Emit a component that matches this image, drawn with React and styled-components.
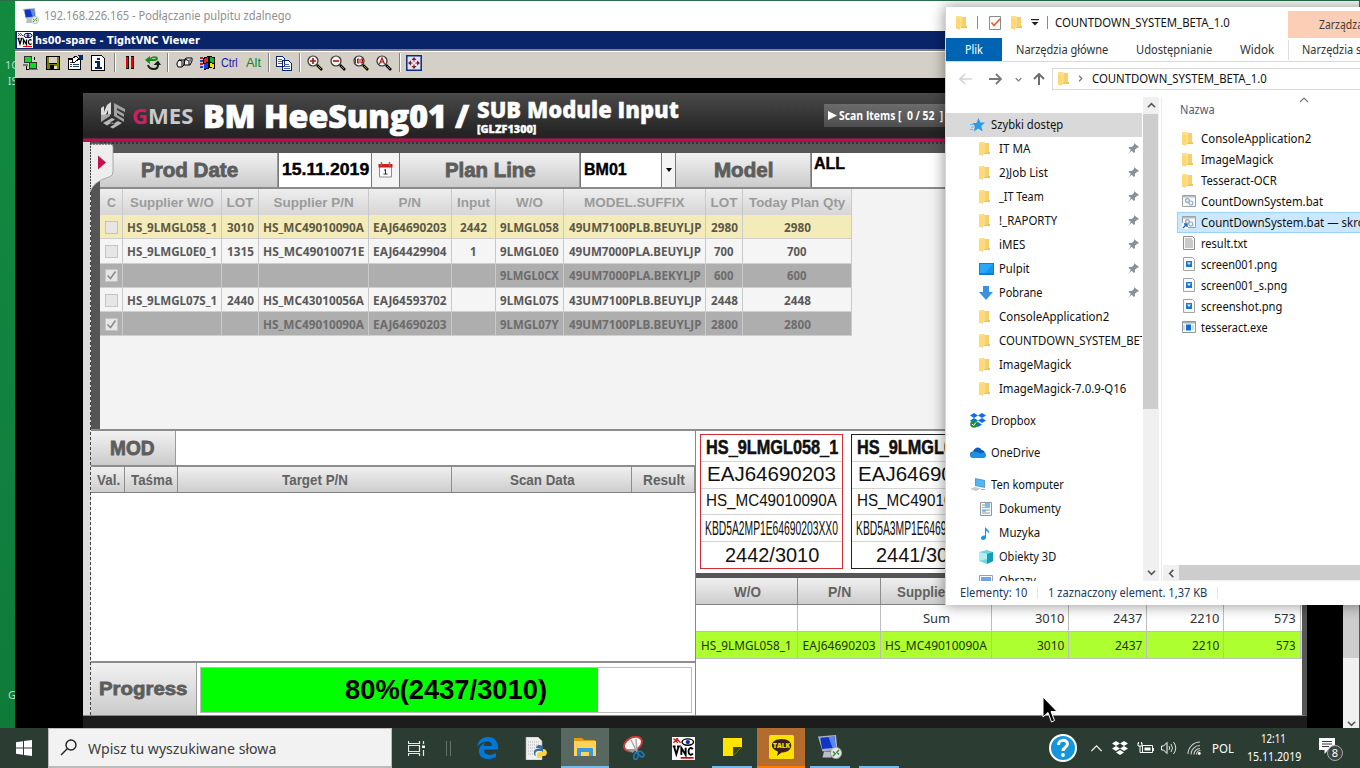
import React, { useLayoutEffect, useRef, useState } from "react";
import styled, { createGlobalStyle } from "styled-components";

const Global = createGlobalStyle`
  * { box-sizing: border-box; }
  html, body { margin: 0; padding: 0; width: 1360px; height: 768px; overflow: hidden; }
  body { font-family: "Noto Sans", "Open Sans", sans-serif; font-size: 12px; background: #13853c; }
  svg { display: block; flex: none; }
`;

/* ---------- text fitted to a measured width ---------- */
const FitBox = styled.span`
  display: inline-block;
  flex: none;
  width: ${(p) => p.$w}px;
  white-space: nowrap;
`;
const FitInner = styled.span`
  display: inline-block;
  transform-origin: 0 50%;
`;
function Fit({ w, children }) {
  const ref = useRef(null);
  const [s, setS] = useState(1);
  useLayoutEffect(() => {
    if (ref.current.offsetWidth) setS(w / ref.current.offsetWidth);
  }, [w]);
  return (
    <FitBox $w={w}>
      <FitInner ref={ref} style={{ transform: `scaleX(${s})` }}>{children}</FitInner>
    </FitBox>
  );
}

/* ---------- desktop ---------- */
const Screen = styled.div`
  position: relative;
  width: 1360px;
  height: 768px;
  overflow: hidden;
  display: flex;
  flex-direction: column;
  background: linear-gradient(180deg, #128a3e, #118040 60%, #0f7a38);
`;
const DesktopRow = styled.div`
  display: flex;
  height: 728px;
  border-top: 1px solid #2c6e49;
`;
const DesktopStrip = styled.div`
  flex: none;
  width: 15px;
  display: flex;
  flex-direction: column;
  padding: 56px 0 0 5px;
  color: #b9dcc4;
  font-size: 11px;
  line-height: 16px;
  overflow: hidden;
  white-space: nowrap;
`;
const StripLast = styled.div`
  margin-top: 598px;
  padding-left: 3px;
`;
const RdpWindow = styled.div`
  flex: none;
  width: 1344px;
  display: flex;
  flex-direction: column;
  background: #000;
`;
const RdpTitle = styled.div`
  height: 30px;
  display: flex;
  align-items: center;
  gap: 5px;
  padding: 0 0 1px 8px;
  background: #fff;
  color: #8f8f8f;
`;
const VncTitle = styled.div`
  height: 18px;
  display: flex;
  align-items: center;
  gap: 2px;
  padding-left: 2px;
  background: #0a246a;
  color: #fff;
  font: bold 11px "DejaVu Sans", sans-serif;
`;
const VncToolbar = styled.div`
  height: 29px;
  display: flex;
  align-items: center;
  padding: 0 0 4px 8px;
  background: #d4d0c8;
  border-top: 2px solid #808080;
  box-shadow: inset 0 1px #fff;
  font: 12px "Liberation Sans", sans-serif;
`;
const Slot = styled.div`
  width: ${(p) => p.$w}px;
  height: 18px;
  display: flex;
  align-items: center;
  color: ${(p) => p.$c || "#000"};
`;
const ToolSep = styled.div`
  width: 2px;
  height: 19px;
  margin-right: ${(p) => p.$r}px;
  background: #808080;
  border-right: 1px solid #fff;
`;
const RemoteArea = styled.div`
  flex: 1;
  display: flex;
  justify-content: space-between;
  padding-left: 68px;
  background: #000;
`;

/* ---------- GMES application ---------- */
const Gmes = styled.div`
  flex: none;
  width: 1224px;
  margin-top: 15px;
  height: 635px;
  display: flex;
  flex-direction: column;
  background: #1c1c1c;
`;
const GmesHeader = styled.div`
  height: 45px;
  display: flex;
  align-items: center;
  padding-left: 17px;
  color: #fff;
  background: linear-gradient(180deg, #4a4a4a, #242424 90%);
  font-weight: 900;
`;
const Brand = styled.div`
  display: flex;
  margin-left: 6px;
  font: bold 21px/30px "Open Sans", sans-serif;
  color: #c9c9c9;
`;
const BrandG = styled.span`color: #cf1f62;`;
const Title = styled.div`
  margin: 1px 0 0 10px;
  font: 800 31px/38px "Open Sans", sans-serif;
  -webkit-text-stroke: 0.7px #fff;
`;
const SubTitle = styled.div`
  display: flex;
  flex-direction: column;
  margin-left: 8px;
  margin-top: 1px;
  font: 800 22px/25px "Open Sans", sans-serif;
  -webkit-text-stroke: 0.3px #fff;
`;
const SubCode = styled.div`
  font: 800 10.5px/12px "Open Sans", sans-serif;
  margin-top: 1px;
`;
const ScanItems = styled.div`
  width: 140px;
  height: 23px;
  margin-left: 145px;
  padding-left: 4px;
  display: flex;
  align-items: center;
  gap: 2px;
  background: linear-gradient(180deg, #6c6c6c, #4d4d4d);
  font: bold 11.5px "Open Sans", sans-serif;
  white-space: pre;
`;
const ScanText = styled.span`
  white-space: pre;
  span { white-space: pre; }
`;
const Magenta = styled.div`
  height: 4px;
  background: #c00d50;
  border-bottom: 1px solid #7d2746;
  border-top: 1px solid #702040;
`;
const GmesBody = styled.div`
  height: 574px;
  width: 1224px;
  display: flex;
  border-right: 5px solid #555;
  border-bottom: 1px solid #8a8a8a;
  background: #5a5a5a;
`;
const EdgeStrip = styled.div`
  flex: none;
  width: 8px;
  background: #dcdcdc;
  border-right: 1px dashed #444;
`;
const Work = styled.div`
  flex: 1;
  min-width: 0;
  display: flex;
  flex-direction: column;
`;
const UpperArea = styled.div`
  height: 287px;
  display: flex;
  background: #555;
`;
const TabColumn = styled.div`
  flex: none;
  position: relative;
  width: 9px;
`;
const TabHandle = styled.div`
  position: absolute;
  z-index: 2;
  left: -1px;
  top: 1px;
`;
const UpperMain = styled.div`
  flex: 1;
  min-width: 0;
  display: flex;
  flex-direction: column;
`;
const DarkStrip = styled.div`
  height: 11px;
  background: #575757;
  border-top: 2px dotted #343434;
`;
const FilterBar = styled.div`
  height: 36px;
  display: flex;
  overflow: hidden;
  border-bottom: 2px solid #8b8b8b;
  background: #fff;
`;
const Label = styled.div`
  flex: none;
  width: ${(p) => p.$w}px;
  padding-left: ${(p) => p.$pl}px;
  display: flex;
  align-items: center;
  color: #5d5d5d;
  background: linear-gradient(180deg, #f2f2f2, #cbcbcb);
  border-right: 1px solid #999;
  font: bold ${(p) => p.$fs || 19.5}px "Liberation Sans", sans-serif;
  -webkit-text-stroke: 0.8px #5d5d5d;
`;
const Field = styled.div`
  flex: none;
  width: ${(p) => p.$w}px;
  padding: ${(p) => p.$top ? "2px 0 0 2px" : "0 0 0 3px"};
  display: flex;
  align-items: ${(p) => (p.$top ? "flex-start" : "center")};
  background: #fff;
  color: #000;
  border-left: 1px solid #777;
  font: bold 16px "Liberation Sans", sans-serif;
  -webkit-text-stroke: 0.4px #000;
`;
const FieldButton = styled.div`
  flex: none;
  width: ${(p) => p.$w}px;
  display: flex;
  align-items: center;
  justify-content: center;
  background: #f4f4f4;
  border-left: 1px solid #777;
  border-right: 1px solid #777;
`;
const PlanArea = styled.div`
  flex: 1;
  background: #f3f3f3;
`;
const planCols = "23px 99px 37px 110px 83px 44px 68px 142px 37px 109px";
const PlanHead = styled.div`
  display: grid;
  width: 752px;
  grid-template-columns: ${planCols};
  height: 26px;
  background: linear-gradient(180deg, #eee, #d6d6d6);
  color: #9b9b9b;
  font: bold 13.5px "Liberation Sans", sans-serif;
`;
const PlanRow = styled.div`
  display: grid;
  width: 752px;
  grid-template-columns: ${planCols};
  height: 24.3px;
  background: ${(p) => p.$bg};
  color: ${(p) => p.$fg};
  font-weight: 700;
  font-size: 12px;
  border-bottom: 1px solid #cfcfcf;
`;
const PlanCell = styled.div`
  display: flex;
  align-items: center;
  justify-content: center;
  padding-top: 1px;
  border-right: 1px solid #c9c9c9;
`;
const Check = styled.div`
  width: 13px;
  height: 13px;
  border: 1px solid #c4c4c4;
  background: #e6e6e6;
`;

const LowerArea = styled.div`
  flex: 1;
  display: flex;
  border-top: 2px solid #8d8d8d;
`;
const LowerLeft = styled.div`
  flex: none;
  width: 605px;
  display: flex;
  flex-direction: column;
  background: #fff;
  border-right: 1px solid #888;
`;
const ModRow = styled.div`
  height: 36px;
  display: flex;
  border-bottom: 2px solid #8d8d8d;
`;
const HeadRow = styled.div`
  display: grid;
  grid-template-columns: ${(p) => p.$cols};
  height: ${(p) => p.$h}px;
  background: linear-gradient(180deg, #f0f0f0, #cdcdcd);
  border-bottom: 1px solid #808080;
  color: #626262;
  font: bold 14px "Liberation Sans", sans-serif;
`;
const HeadCell = styled.div`
  display: flex;
  align-items: center;
  justify-content: center;
  padding: 1px 0 0 1px;
  border-right: 1px solid #8d8d8d;
`;
const ScanBody = styled.div`
  flex: 1;
  background: #fff;
  border-bottom: 2px solid #8d8d8d;
`;
const ProgressRow = styled.div`
  height: 52px;
  display: flex;
`;
const ProgressTrack = styled.div`
  position: relative;
  width: 492px;
  height: 46px;
  margin: 4px 0 0 3px;
  border: 1px solid #bdbdbd;
  background: #fff;
`;
const ProgressFill = styled.div`
  height: 100%;
  background: #00ff00;
`;
const ProgressText = styled.div`
  position: absolute;
  inset: 0;
  display: flex;
  align-items: center;
  justify-content: center;
  color: #000;
  font: bold 28px "Liberation Sans", sans-serif;
`;
const LowerRight = styled.div`
  flex: 1;
  min-width: 0;
  display: flex;
  flex-direction: column;
  background: #fff;
`;
const Cards = styled.div`
  height: 147px;
  display: flex;
  gap: 8px;
  padding: 3px 0 0 4px;
  border-bottom: 5px solid #555;
  overflow: hidden;
`;
const Card = styled.div`
  flex: none;
  width: 143px;
  height: 135px;
  display: flex;
  flex-direction: column;
  border: 1px solid ${(p) => p.$c};
  color: #111;
  font-family: "Liberation Sans", sans-serif;
`;
const CardLine = styled.div`
  flex: 1;
  display: flex;
  align-items: center;
  justify-content: center;
  line-height: 24px;
  padding-bottom: 1px;
  font-size: ${(p) => p.$fs}px;
  font-weight: ${(p) => (p.$b ? 700 : 400)};
  -webkit-text-stroke: ${(p) => (p.$b ? 0.5 : 0)}px #111;
  border-bottom: ${(p) => (p.$last ? 0 : 1)}px solid #d5d5d5;
`;
const sumCols = "102px 83px 111px 77px 78px 77px 77px";
const SumRow = styled.div`
  display: grid;
  grid-template-columns: ${sumCols};
  height: ${(p) => p.$h}px;
  background: ${(p) => p.$bg};
  border-bottom: 1px solid #bdbdbd;
  color: ${(p) => p.$fg};
`;
const SumCell = styled.div`
  display: flex;
  align-items: center;
  justify-content: ${(p) => (p.$r ? "flex-end" : "center")};
  padding-right: ${(p) => (p.$r ? 4 : 0)}px;
  padding-top: 1px;
  border-right: 1px solid #bdbdbd;
`;
const VScroll = styled.div`
  flex: none;
  width: 16px;
  display: flex;
  flex-direction: column;
  justify-content: flex-end;
  align-items: center;
  background: #f0f0f0;
`;
const VThumb = styled.div`
  width: 16px;
  height: 80px;
  margin-bottom: 61px;
  background: #cdcdcd;
`;

/* ---------- Explorer ---------- */
const Explorer = styled.div`
  position: absolute;
  left: 945px;
  top: 7px;
  width: 430px;
  height: 598px;
  display: flex;
  flex-direction: column;
  background: #fff;
  border-left: 1px solid #d6d6d6;
  box-shadow: 0 0 14px rgba(0, 0, 0, 0.45);
  color: #111;
  z-index: 5;
`;
const ExTitle = styled.div`
  height: 31px;
  display: flex;
  align-items: center;
  padding-left: 10px;
`;
const Bar = styled.div`
  flex: none;
  width: 1px;
  height: ${(p) => p.$h || 13}px;
  background: ${(p) => p.$c || "#8a8a8a"};
  margin: 0 ${(p) => p.$r}px 0 ${(p) => p.$l}px;
`;
const Pad = styled.div`
  flex: none;
  margin-right: ${(p) => p.$r || 0}px;
  margin-left: ${(p) => p.$l || 0}px;
`;
const Context = styled.div`
  flex: none;
  align-self: flex-end;
  width: 100px;
  height: 27px;
  padding-left: 31px;
  margin-left: 58px;
  line-height: 27px;
  background: #fdceb6;
  color: #473a34;
`;
const Ribbon = styled.div`
  height: 24px;
  display: flex;
  align-items: center;
  border-bottom: 1px solid #dadada;
  color: #333;
`;
const FileTab = styled.div`
  flex: none;
  width: 56px;
  height: 23px;
  padding-left: 19px;
  line-height: 23px;
  background: #0063b1;
  color: #fff;
`;
const RibbonTab = styled.div`
  flex: none;
  margin-left: ${(p) => p.$l}px;
`;
const NavBar = styled.div`
  height: 35px;
  display: flex;
  align-items: center;
  padding: 0 0 1px 13px;
`;
const Address = styled.div`
  height: 22px;
  flex: 1;
  display: flex;
  align-items: center;
  padding: 0 0 1px 5px;
  border: 1px solid #d9d9d9;
`;
const Panes = styled.div`
  height: 484px;
  display: flex;
`;
const Tree = styled.div`
  flex: none;
  width: 197px;
  padding-top: 16px;
  overflow: hidden;
`;
const TreeRow = styled.div`
  height: 24px;
  width: 196px;
  margin-top: ${(p) => p.$gap || 0}px;
  padding-left: ${(p) => (p.$top ? 24 : 33)}px;
  padding-bottom: 1px;
  display: flex;
  align-items: center;
  overflow: hidden;
  background: ${(p) => (p.$sel ? "#d9d9d9" : "transparent")};
`;
const TreeIcon = styled.div`
  width: ${(p) => (p.$top ? 21 : 20)}px;
  flex: none;
`;
const TreePin = styled.div`
  margin-left: auto;
  margin-right: 3px;
`;
const ExScroll = styled.div`
  flex: none;
  width: 16px;
  display: flex;
  flex-direction: column;
  align-items: center;
  background: #f0f0f0;
`;
const ExThumb = styled.div`
  width: 15px;
  height: 295px;
  align-self: flex-start;
  margin-bottom: 155px;
  background: #cdcdcd;
`;
const ArrowBox = styled.div`
  flex: none;
  width: 16px;
  height: 17px;
  display: flex;
  align-items: center;
  justify-content: center;
`;
const FileArea = styled.div`
  flex: 1;
  min-width: 0;
  margin-left: 2px;
  border-left: 1px solid #ececec;
  display: flex;
  flex-direction: column;
`;
const ColHead = styled.div`
  height: 31px;
  display: flex;
  padding: 4px 0 0 18px;
  color: #4c607a;
`;
const SortMark = styled.div`
  margin: -6px 0 0 84px;
`;
const FileRow = styled.div`
  height: 21px;
  margin-left: 15px;
  padding-left: ${(p) => (p.$sel ? 4 : 5)}px;
  display: flex;
  align-items: center;
  background: ${(p) => (p.$sel ? "#cce8ff" : "transparent")};
  border: ${(p) => (p.$sel ? "1px solid #99d1ff" : "0")};
`;
const FileIcon = styled.div`
  width: 19px;
  flex: none;
  padding-bottom: 1px;
`;
const HScroll = styled.div`
  margin-top: auto;
  margin-left: 1px;
  height: 16px;
  display: flex;
  background: #f0f0f0;
`;
const HThumb = styled.div`
  flex: 1;
  height: 15px;
  background: #cdcdcd;
`;
const Status = styled.div`
  flex: 1;
  display: flex;
  align-items: center;
  padding: 0 0 1px 14px;
  color: #1e395b;
`;

/* ---------- taskbar ---------- */
const Taskbar = styled.div`
  height: 40px;
  display: flex;
  background: #2b3d33;
  color: #fff;
  position: relative;
`;
const StartBtn = styled.div`
  width: 48px;
  display: flex;
  align-items: center;
  justify-content: center;
`;
const Search = styled.div`
  width: 344px;
  display: flex;
  align-items: center;
  padding-left: 11px;
  gap: 11px;
  background: #f2f2f2;
  border: 1px solid #bbb;
  border-bottom-width: 2px;
  color: #3c3c3c;
  font-size: 15px;
`;
const TaskBtn = styled.div`
  width: ${(p) => p.$w || 48}px;
  margin-right: ${(p) => p.$r || 0}px;
  height: 40px;
  display: flex;
  align-items: center;
  justify-content: center;
  background: ${(p) => p.$bg || "transparent"};
  border-bottom: ${(p) => (p.$line ? 2 : 0)}px solid ${(p) => p.$line || "transparent"};
`;
const Tray = styled.div`
  margin-left: auto;
  display: flex;
  align-items: center;
  padding-right: 16px;
`;
const Clock = styled.div`
  width: 55px;
  display: flex;
  flex-direction: column;
  align-items: center;
  line-height: 18px;
  padding-bottom: 1px;
  margin: 0 18px 0 12px;
`;
const Cursor = styled.div`
  position: absolute;
  left: 1042px;
  top: 696px;
  z-index: 6;
`;

/* ---------- icons ---------- */
const Folder = () => (
  <svg width="11" height="15" viewBox="0 0 11 15">
    <path d="M0 1h5l1 1h4v11H5l-1 1H0z" fill="#ffe08a" />
    <path d="M6 2h4v11H6z" fill="#f7d06d" />
    <path d="M0 3l4 1v11l-4-2z" fill="#ffd873" />
    <path d="M10 11h1v2H5v-1z" fill="#efc55b" />
  </svg>
);
const Pin = () => (
  <svg width="11" height="11" viewBox="0 0 11 11">
    <path d="M6 0l5 4-1.500 1-.5-.2-2.200 2.200.2 2-1 1L3.600 7.800 0 11l2.800-4L.5 4.800l1.200-1 2 .3L6 2z" fill="#87929b" />
  </svg>
);
const Chevron = ({ d = "down", c = "#555", s = 9, w = 1.8 }) => {
  const paths = { down: "M1 3l4 4 4-4", up: "M1 7l4-4 4 4", left: "M7 1L3 5l4 4", right: "M3 1l4 4-4 4" };
  return <svg width={s} height={s} viewBox="0 0 10 10"><path d={paths[d]} fill="none" stroke={c} strokeWidth={w} /></svg>;
};
const NavArrow = ({ c }) => (
  <svg width="13" height="12" viewBox="0 0 13 12"><path d="M1 6h12M6 1L1 6l5 5" fill="none" stroke={c} strokeWidth="1.700" /></svg>
);
const Star = () => (
  <svg width="15" height="14" viewBox="0 0 15 14">
    <path d="M8.500 0l1.800 4.600H15L11.300 8l1.400 5.500-4.400-3-4.500 3L5 8.500 2.500 5h4z" fill="#2a9be8" />
    <path d="M0 6.500h3M1 9h3M0 11.500h3" stroke="#6ab9ee" />
  </svg>
);
const Desk = () => (
  <svg width="15" height="12" viewBox="0 0 15 12"><path d="M0 0h15v12H0z" fill="#0f7fd4" /><path d="M1 1h13v9H1z" fill="#27a8fa" /><path d="M14 1v9H6z" fill="#1696f0" /></svg>
);
const DownArrow = () => (
  <svg width="14" height="14" viewBox="0 0 14 14"><path d="M4 0h6v6h4l-7 8-7-8h4z" fill="#3a93de" /></svg>
);
const DropboxMark = ({ c = "#0f6df2", ok }) => (
  <svg width="16" height="15" viewBox="0 0 16 15">
    <path d="M4 0l4 2.500L4 5 0 2.500zM12 0l4 2.500L12 5 8 2.500zM4 5l4 2.500L4 10 0 7.500zM12 5l4 2.500-4 2.500-4-2.500zM8 9l4 2.500L8 14l-4-2.500z" fill={c} />
    {ok && <><circle cx="4" cy="11" r="3.800" fill="#179437" /><path d="M2 11l1.500 1.600L6 9.500" stroke="#fff" fill="none" /></>}
  </svg>
);
const Cloud = () => (
  <svg width="16" height="11" viewBox="0 0 16 11">
    <path d="M3 10.500a3 3 0 010-6C4 1 9-1.500 11.500 3A4 4 0 0113 10.500z" fill="#0a5fb8" />
    <path d="M3 11a3 3 0 01.5-6C8 4 9 8 14 5.500A2.800 2.800 0 0113.500 11z" fill="#1e90e6" />
  </svg>
);
const PcIcon = () => (
  <svg width="16" height="13" viewBox="0 0 16 13">
    <path d="M5 0l10 2v8L5 8z" fill="#5b9cc8" /><path d="M6 1l8 1.700v6L6 7.200z" fill="#4fb5f3" />
    <path d="M0 11l5-2 6 1.500-5 2.500z" fill="#c4cace" /><path d="M11 11h4v1h-4z" fill="#a6b1b8" />
  </svg>
);
const DocIcon = () => (
  <svg width="14" height="14" viewBox="-1 0 14 14">
    <path d="M.5.500h11v13H.5z" fill="#f6f8f9" stroke="#8e989e" /><path d="M2 3h5M2 8h8M2 11h8" stroke="#8f9da6" />
    <path d="M5 1h5v5H2V5h3z" fill="#7cbce6" /><path d="M2 9h4" stroke="#3b94d6" />
  </svg>
);
const MusicIcon = () => (
  <svg width="12" height="14" viewBox="-1 0 12 14"><path d="M5 0c0 3 5 3 4 8-.5-2-2-3-3-3v6.500C6 14.500 1 15 1 11.800 1 10 3.500 9 5 9.600z" fill="#1696ef" /></svg>
);
const CubeIcon = () => (
  <svg width="15" height="14" viewBox="0 0 15 14"><path d="M0 2l8-2 6 2v9l-6 3-8-3z" fill="#6fd7e2" /><path d="M8 4l6-2v9l-6 3z" fill="#0f9dbb" /><path d="M0 2l8 2v5l-8 2z" fill="#b5eff2" /></svg>
);
const PicIcon = () => (
  <svg width="14" height="12" viewBox="0 0 14 12"><path d="M.5.500h13v11H.5z" fill="#fff" stroke="#97a1a8" /><path d="M2 2h10v7H2z" fill="#6fa8df" /></svg>
);
const BatIcon = ({ link }) => (
  <svg width="14" height="14" viewBox="0 0 14 14">
    <path d="M.5 1.500h13v11H.5z" fill="#f8f8f8" stroke="#9aa0a4" /><path d="M1 2h12v1.500H1z" fill="#b9bec2" />
    <circle cx="5.500" cy="6.500" r="1.900" fill="none" stroke="#8fa4b3" strokeWidth="1.200" /><circle cx="8.800" cy="9" r="2" fill="none" stroke="#86b4d2" strokeWidth="1.200" />
    {link && <><path d="M0 8h6v6H0z" fill="#fff" /><path d="M1 13l3-3M2 9h3v3" stroke="#2463a8" fill="none" strokeWidth="1.400" /></>}
  </svg>
);
const TxtIcon = () => (
  <svg width="14" height="14" viewBox="-1 0 14 14"><path d="M.5.500h9l2 2v11H.5z" fill="#f7f7f7" stroke="#8f8f8f" /><path d="M2 3h7M2 5h8M2 7h8M2 9h8M2 11h8" stroke="#9b9b9b" /></svg>
);
const PngIcon = () => (
  <svg width="14" height="14" viewBox="-1 0 14 14"><path d="M.5.500h9l2 2v11H.5z" fill="#fafafa" stroke="#a3a3a3" /><path d="M3 4h6v6H3z" fill="#1a7ad0" /><path d="M4 5.500h4L6 8z" fill="#e6f3ff" /></svg>
);
const ExeIcon = () => (
  <svg width="14" height="12" viewBox="0 0 14 12"><path d="M.5.500h13v11H.5z" fill="#fafafa" stroke="#8f989e" /><path d="M1 1h12v1.500H1z" fill="#a9b1b6" /><path d="M4 3.500h5v6H4z" fill="#0b6fd3" /><path d="M2 4v5M11 4v5" stroke="#b4bbc0" /></svg>
);
const RdpIcon = ({ s = 16 }) => (
  <svg width={s} height={s} viewBox="0 0 16 16">
    <path d="M0 1l12-1 1 10-10 1z" fill="#a9b4c6" /><path d="M1.500 1.800l9.500-.8.7 7.500-9 .8z" fill="#1034c8" /><path d="M7 1.300l4-.3.7 7.500-2 .2z" fill="#5d86ee" />
    <path d="M4 11h4l1 4H3z" fill="#b8bfc8" /><circle cx="12" cy="12" r="3.700" fill="#e3e6e3" stroke="#a5aaa5" strokeWidth=".6" /><path d="M10 11l1.500 1.500L10 14M14 10l-1.500 1.500L14 13" stroke="#2b8e37" fill="none" strokeWidth=".9" />
  </svg>
);
const VncIcon = ({ s = 16 }) => (
  <svg width={s} height={s} viewBox="0 0 16 16">
    <path d="M0 0h16v16H0z" fill="#fff" /><path d="M1 1l3 3M4 1L1 4M3 1l3 3" stroke="#c22" />
    <ellipse cx="11" cy="3.500" rx="4" ry="2.200" fill="#fff" stroke="#000" /><circle cx="11" cy="3.500" r="1.500" fill="#12c" />
    <path d="M.5 6.500h2M3.500 6.500h2M1.500 7l1.500 5 1.500-5M6.500 12.500v-5l3 5v-5M14.500 8.500c-1-1.500-3-1-3 1.500s2 3 3 1.500" fill="none" stroke="#000" strokeWidth="1.300" />
    <path d="M6 14.500h9" stroke="#e00" strokeWidth="1.200" />
  </svg>
);
const Pix = ({ w = 16, children }) => <svg width={w} height="16" viewBox={`0 0 ${w} 16`} shapeRendering="crispEdges">{children}</svg>;
const ConnIcon = () => <Pix><path d="M1 1h8v7H1zM6 7h8v7H6z" fill="#333" /><path d="M2 2h6v5H2zM7 8h6v5H7z" fill="#0cdc22" /><path d="M0 9h5v2H0zM5 14h10v1H5z" fill="#777" /><path d="M11 2v3M3 11v3h3" stroke="#000" fill="none" /></Pix>;
const SaveIcon = () => <Pix><path d="M1 1h14v14H1z" fill="#000" /><path d="M2 2h2v7h8V2h2v12H2z" fill="#808000" /><path d="M4 2h8v6H4z" fill="#d4d0c8" /><path d="M9 11h3v3H9z" fill="#ddd" /><path d="M5 10h4v5H5z" fill="#000" /></Pix>;
const PropIcon = () => <Pix><path d="M1 3h13v12H1z" fill="#000" /><path d="M2 5h11v9H2z" fill="#fff" /><path d="M3 7h2v1H3zM3 9h2v1H3zM3 11h2v1H3zM6 9h6v1H6zM6 11h6v1H6z" fill="#246" /><path d="M5 4l4-3 3 3-4 3H5z" fill="#fff" stroke="#000" /><path d="M11 0h5v5h-3z" fill="#0a246a" /></Pix>;
const InfoIcon = () => <Pix><path d="M1.500.500h10l3 3v12h-13z" fill="#fff" stroke="#000" /><path d="M7 3h3v2H7zM5 6h5v6h2v2H5v-2h2V8H5z" fill="#0a246a" /></Pix>;
const PauseIcon = () => <Pix w={10}><path d="M1 1h3v13H1zM6 1h3v13H6z" fill="#000" /><path d="M1 2h2v11H1zM6 2h2v11H6z" fill="#e00" /></Pix>;
const RefreshIcon = () => (
  <svg width="16" height="14" viewBox="0 0 16 14">
    <path d="M4 5h5q3 0 3-2.500" fill="none" stroke="#138a1c" strokeWidth="2" transform="translate(0 -1)" /><path d="M0 4l5-4v8z" fill="#138a1c" /><path d="M5 3.500Q7 0 12 1.500" fill="none" stroke="#138a1c" strokeWidth="1.400" />
    <path d="M3 9q1 4 6 4 4 0 4-4" fill="none" stroke="#10240f" strokeWidth="2" /><path d="M8.500 9L13 4.500 16 9z" fill="#10240f" />
  </svg>
);
const KeysIcon = () => <svg width="17" height="12" viewBox="0 0 17 12"><path d="M1 6l2-3h6l-1 5-2 2H2L1 8zM8 4l2-3h6v3l-2 4H8z" fill="#eee" stroke="#000" /><path d="M3 3l3 1v6M9 2l4 2v4" stroke="#000" fill="none" /><path d="M12 3l3-1v2l-2 3z" fill="#777" /></svg>;
const FlagIcon = () => <Pix><path d="M0 2h3v2H0zM0 8h3v2H0z" fill="#b22" /><path d="M0 5h3v2H0zM0 11h3v2H0z" fill="#14c" /><path d="M3 3l5-2 7 1v12l-5-1-6 2z" fill="#000" /><path d="M4 4l4-2v5L4 8z" fill="#e22" /><path d="M10 2l4 1v5l-4-1z" fill="#0b3" /><path d="M4 9l4-1v5l-4 1z" fill="#14d" /><path d="M10 8l4 1v4l-4-1z" fill="#fd0" /></Pix>;
const CopyIcon = () => <Pix><path d="M.5 1.500h6l2 2v8h-8zM6.500 5.500h6l3 3v7h-9z" fill="#fff" stroke="#0a246a" /><path d="M2 4h4M2 6h4M2 8h4M8 9h5M8 11h6M8 13h6" stroke="#4a5f9e" /></Pix>;
const ZoomIcon = ({ k }) => (
  <svg width="16" height="16" viewBox="0 0 16 16">
    <circle cx="6" cy="6" r="5" fill="#fdeeee" stroke="#333" strokeWidth="1.200" /><path d="M10 10l5 5" stroke="#000" strokeWidth="2.500" /><path d="M11 11l3 3" stroke="#b5b52a" strokeWidth=".8" />
    {k === "+" && <path d="M3 6h6M6 3v6" stroke="#9c1a1a" strokeWidth="1.600" />}
    {k === "-" && <path d="M3 6h6" stroke="#9c1a1a" strokeWidth="1.600" />}
    {k === "1" && <path d="M2.500 3.500v5M4.500 4h1.500v4H4.500zM8 4h1.500v4H8z" stroke="#9c1a1a" fill="none" />}
    {k === "A" && <path d="M3.500 9L6 3l2.500 6M4 7h4" stroke="#9c1a1a" fill="none" strokeWidth="1.200" />}
  </svg>
);
const FullIcon = () => <svg width="16" height="16" viewBox="0 0 16 16"><path d="M.8.800h14.400v14.400H.8z" fill="#dfe3f6" stroke="#102a80" strokeWidth="1.500" /><path d="M8 2l2.500 3h-5zM8 14l2.500-3h-5zM2 8l3-2.500v5zM14 8l-3-2.500v5z" fill="#8b1a1a" /><path d="M8 4v2.500M8 9.500V12M4 8h2.500M9.500 8H12" stroke="#8b1a1a" /></svg>;
const MesLogo = () => (
  <svg width="26" height="27" viewBox="0 0 26 27">
    <path d="M1 6l3-2 0 6 3-7 4-3v12l-3 2V8l-3 7-3 2-1-5z" fill="#dcdcdc" />
    <path d="M1 13v7l9-6v-2z" fill="#a8a8a8" />
    <path d="M14 1l11 6v3l-8-4v2l7 4v3l-7-4v2l7 4v3l-10-6z" fill="#a2a2a2" />
    <path d="M3 21l9-5 3 1.500-5 3 3 1.500 5-3 4 2-9 5.500-3-1.500 5-3-3-1.500-5 3z" fill="#b9b9b9" />
  </svg>
);
const TabShape = () => (
  <svg width="24" height="50" viewBox="0 0 24 50">
    <path d="M0 1h20q3 0 3 3v25q0 4-4 5-15 4-19 15z" fill="#eee" stroke="#999" strokeWidth=".8" />
    <path d="M.5 0v46M0 1h22" stroke="#444" strokeDasharray="2 1" fill="none" /><path d="M8 12.500l8 7-8 7z" fill="#c5104f" />
  </svg>
);
const CalIcon = () => (
  <svg width="15" height="16" viewBox="0 0 15 16"><path d="M1.500 3h12v12h-12z" fill="#fafafa" stroke="#8d8d8d" /><path d="M.5 2h14v3.500H.5z" fill="#c81f1f" /><path d="M3.500 0v4M11.500 0v4" stroke="#777" strokeWidth="1.500" /><path d="M6 8.500l1.500-1v4.500M5.500 12h4" stroke="#333" fill="none" /></svg>
);

const E = ({ children, t }) => <Slot $w={t}>{children}</Slot>;

/* ---------- data ---------- */
const planHead = [["C", 9], ["Supplier W/O", 84], ["LOT", 27], ["Supplier P/N", 80], ["P/N", 23], ["Input", 33], ["W/O", 27], ["MODEL.SUFFIX", 101], ["LOT", 27], ["Today Plan Qty", 96]];
const planW = [0, 90, 26, 101, 74, 26, 59, 132, 26, 27];
const plan = [
  ["sel", "HS_9LMGL058_1", "3010", "HS_MC49010090A", "EAJ64690203", "2442", "9LMGL058", "49UM7100PLB.BEUYLJP", "2980", "2980"],
  ["", "HS_9LMGL0E0_1", "1315", "HS_MC49010071E", "EAJ64429904", "1", "9LMGL0E0", "49UM7000PLA.BEUYLJP", "700", "700"],
  ["done", "", "", "", "", "", "9LMGL0CX", "49UM7000PLA.BEKYLJP", "600", "600"],
  ["", "HS_9LMGL07S_1", "2440", "HS_MC43010056A", "EAJ64593702", "", "9LMGL07S", "43UM7100PLB.BEUYLJP", "2448", "2448"],
  ["done", "", "", "HS_MC49010090A", "EAJ64690203", "", "9LMGL07Y", "49UM7100PLB.BEUYLJP", "2800", "2800"],
];
const rowBg = { sel: "#f4ecb8", "": "#f5f5f5", done: "#aeaeae" };
const rowFg = { sel: "#5d5947", "": "#595959", done: "#6c6c6c" };

const tree = [
  ["Szybki dostęp", 72, Star, { top: 1, sel: 1 }],
  ["IT MA", 31, Folder, { pin: 1 }],
  ["2)Job List", 49, Folder, { pin: 1 }],
  ["_IT Team", 45, Folder, { pin: 1 }],
  ["!_RAPORTY", 58, Folder, { pin: 1 }],
  ["iMES", 26, Folder, { pin: 1 }],
  ["Pulpit", 31, Desk, { pin: 1 }],
  ["Pobrane", 44, DownArrow, { pin: 1 }],
  ["ConsoleApplication2", 110, Folder, {}],
  ["COUNTDOWN_SYSTEM_BETA_1.0", 175, Folder, {}],
  ["ImageMagick", 72, Folder, {}],
  ["ImageMagick-7.0.9-Q16", 127, Folder, {}],
  ["Dropbox", 45, () => <DropboxMark ok />, { top: 1, gap: 8 }],
  ["OneDrive", 49, Cloud, { top: 1, gap: 8 }],
  ["Ten komputer", 73, PcIcon, { top: 1, gap: 8 }],
  ["Dokumenty", 62, DocIcon, {}],
  ["Muzyka", 41, MusicIcon, {}],
  ["Obiekty 3D", 57, CubeIcon, {}],
  ["Obrazy", 37, PicIcon, {}],
];
const files = [
  ["ConsoleApplication2", 110, Folder],
  ["ImageMagick", 72, Folder],
  ["Tesseract-OCR", 76, Folder],
  ["CountDownSystem.bat", 122, BatIcon],
  ["CountDownSystem.bat — skrót", 168, () => <BatIcon link />, 1],
  ["result.txt", 46, TxtIcon],
  ["screen001.png", 76, PngIcon],
  ["screen001_s.png", 86, PngIcon],
  ["screenshot.png", 81, PngIcon],
  ["tesseract.exe", 67, ExeIcon],
];
const cards = [
  { c: "#d42e34", lines: ["HS_9LMGL058_1", "EAJ64690203", "HS_MC49010090A", "KBD5A2MP1E64690203XX0", "2442/3010"] },
  { c: "#222", lines: ["HS_9LMGL058_1", "EAJ64690203", "HS_MC49010090A", "KBD5A3MP1E64690203XX0", "2441/3010"] },
];
const cardFmt = [[20, 132, 1], [21, 129], [16, 131], [20, 133], [21, 94]];

function VncTools() {
  return (
    <VncToolbar>
      <E t={22}><ConnIcon /></E><E t={22}><SaveIcon /></E><E t={23}><PropIcon /></E><E t={24}><InfoIcon /></E>
      <ToolSep $r={9} />
      <E t={20}><PauseIcon /></E><E t={22}><RefreshIcon /></E>
      <ToolSep $r={7} />
      <E t={24}><KeysIcon /></E><E t={21}><FlagIcon /></E>
      <Slot $w={25} $c="#16169a"><Fit w={17}>Ctrl</Fit></Slot><Slot $w={22} $c="#15881c"><Fit w={15}>Alt</Fit></Slot>
      <ToolSep $r={6} />
      <E t={23}><CopyIcon /></E>
      <ToolSep $r={6} />
      <E t={23}><ZoomIcon k="+" /></E><E t={23}><ZoomIcon k="-" /></E><E t={23}><ZoomIcon k="1" /></E><E t={23}><ZoomIcon k="A" /></E>
      <ToolSep $r={5} />
      <FullIcon />
    </VncToolbar>
  );
}

function PlanTable() {
  return (
    <PlanArea>
      <PlanHead>{planHead.map(([t, w], i) => <PlanCell key={i}><Fit w={w}>{t}</Fit></PlanCell>)}</PlanHead>
      {plan.map((r, i) => (
        <PlanRow key={i} $bg={rowBg[r[0]]} $fg={rowFg[r[0]]}>
          {r.map((v, j) => (
            <PlanCell key={j}>
              {j === 0 ? (
                <Check>{v === "done" && <svg width="11" height="11" viewBox="0 0 11 11"><path d="M1.500 5.500l3 3 5-7" fill="none" stroke="#8a8a8a" strokeWidth="1.500" /></svg>}</Check>
              ) : v ? <Fit w={/^\d+$/.test(v) ? v.length * 6.6 : planW[j]}>{v}</Fit> : null}
            </PlanCell>
          ))}
        </PlanRow>
      ))}
    </PlanArea>
  );
}

function GmesApp() {
  return (
    <Gmes>
      <GmesHeader>
        <MesLogo />
        <Brand><Fit w={61}><BrandG>G</BrandG>MES</Fit></Brand>
        <Title><Fit w={266}>BM HeeSung01 /</Fit></Title>
        <SubTitle><Fit w={202}>SUB Module Input</Fit><SubCode><Fit w={59}>[GLZF1300]</Fit></SubCode></SubTitle>
        <ScanItems>
          <svg width="9" height="9" viewBox="0 0 9 9"><path d="M0 0l9 4.500L0 9z" fill="#fff" /></svg>
          <ScanText><Fit w={104}>{"Scan Items [  0 / 52  ]"}</Fit></ScanText>
        </ScanItems>
      </GmesHeader>
      <Magenta />
      <GmesBody>
        <EdgeStrip />
        <Work>
          <UpperArea>
            <TabColumn><TabHandle><TabShape /></TabHandle></TabColumn>
            <UpperMain>
              <DarkStrip />
              <FilterBar>
                <Label $w={178} $pl={41}><Fit w={97}>Prod Date</Fit></Label>
                <Field $w={93}><Fit w={87}>15.11.2019</Fit></Field>
                <FieldButton $w={29}><CalIcon /></FieldButton>
                <Label $w={180} $pl={45}><Fit w={91}>Plan Line</Fit></Label>
                <Field $w={81}><Fit w={43}>BM01</Fit></Field>
                <FieldButton $w={15}><svg width="6" height="4" viewBox="0 0 6 4"><path d="M0 0h6L3 4z" fill="#000" /></svg></FieldButton>
                <Label $w={135} $pl={38}><Fit w={59}>Model</Fit></Label>
                <Field $w={500} $top><Fit w={31}>ALL</Fit></Field>
              </FilterBar>
              <PlanTable />
            </UpperMain>
          </UpperArea>
          <LowerArea>
            <LowerLeft>
              <ModRow><Label $w={85} $pl={19}><Fit w={45}>MOD</Fit></Label></ModRow>
              <HeadRow $h={26} $cols="34px 53px 274px 180px 63px">
                {[["Val.", 23], ["Taśma", 41], ["Target P/N", 66], ["Scan Data", 65], ["Result", 42]].map(([t, w]) => <HeadCell key={t}><Fit w={w}>{t}</Fit></HeadCell>)}
              </HeadRow>
              <ScanBody />
              <ProgressRow>
                <Label $w={106} $pl={8} $fs={19}><Fit w={88}>Progress</Fit></Label>
                <ProgressTrack>
                  <ProgressFill style={{ width: "81%" }} />
                  <ProgressText><Fit w={202}>80%(2437/3010)</Fit></ProgressText>
                </ProgressTrack>
              </ProgressRow>
            </LowerLeft>
            <LowerRight>
              <Cards>
                {cards.map((c, i) => (
                  <Card key={i} $c={c.c}>
                    {c.lines.map((t, j) => (
                      <CardLine key={j} $fs={cardFmt[j][0]} $b={cardFmt[j][2]} $last={j === 4}><Fit w={cardFmt[j][1]}>{t}</Fit></CardLine>
                    ))}
                  </Card>
                ))}
              </Cards>
              <HeadRow $h={27} $cols={sumCols}>
                {[["W/O", 27], ["P/N", 23], ["Supplier P/N", 79]].map(([t, w]) => <HeadCell key={t}><Fit w={w}>{t}</Fit></HeadCell>)}
                <HeadCell /><HeadCell /><HeadCell /><HeadCell />
              </HeadRow>
              <SumRow $h={27} $bg="#fff" $fg="#333">
                <SumCell /><SumCell /><SumCell><Fit w={27}>Sum</Fit></SumCell>
                {[["3010", 29], ["2437", 29], ["2210", 29], ["573", 22]].map(([t, w]) => <SumCell key={t} $r><Fit w={w}>{t}</Fit></SumCell>)}
              </SumRow>
              <SumRow $h={27} $bg="#adff2f" $fg="#233300">
                <SumCell><Fit w={91}>HS_9LMGL058_1</Fit></SumCell><SumCell><Fit w={73}>EAJ64690203</Fit></SumCell><SumCell><Fit w={102}>HS_MC49010090A</Fit></SumCell>
                {[["3010", 27], ["2437", 27], ["2210", 27], ["573", 20]].map(([t, w]) => <SumCell key={t} $r><Fit w={w}>{t}</Fit></SumCell>)}
              </SumRow>
            </LowerRight>
          </LowerArea>
        </Work>
      </GmesBody>
    </Gmes>
  );
}

function ExplorerWindow() {
  return (
    <Explorer>
      <ExTitle>
        <Folder /><Bar $l={10} $r={11} />
        <svg width="12" height="14" viewBox="0 0 12 14"><path d="M.5.500h11v13H.5z" fill="#fafafa" stroke="#8b8b8b" /><path d="M2.500 6.500L5 9.500 11 3" fill="none" stroke="#e2622f" strokeWidth="1.700" /></svg>
        <Pad $l={10} $r={9}><Folder /></Pad>
        <svg width="8" height="7" viewBox="0 0 8 7"><path d="M0 .6h8" stroke="#222" strokeWidth="1.200" /><path d="M.5 3h7L4 6.500z" fill="#222" /></svg>
        <Bar $l={8} $r={7} />
        <Fit w={175}>COUNTDOWN_SYSTEM_BETA_1.0</Fit>
        <Context><Fit w={59}>Zarządzanie</Fit></Context>
      </ExTitle>
      <Ribbon>
        <FileTab><Fit w={18}>Plik</Fit></FileTab>
        <RibbonTab $l={14}><Fit w={92}>Narzędzia główne</Fit></RibbonTab>
        <RibbonTab $l={28}><Fit w={76}>Udostępnianie</Fit></RibbonTab>
        <RibbonTab $l={28}><Fit w={34}>Widok</Fit></RibbonTab>
        <Bar $l={14} $r={13} $h={20} $c="#ddd" />
        <Fit w={95}>Narzędzia skrótów</Fit>
      </Ribbon>
      <NavBar>
        <NavArrow c="#d4d4d4" />
        <Pad $l={17} $r={13}><svg width="13" height="12" viewBox="0 0 13 12"><path d="M0 6h12M7 1l5 5-5 5" fill="none" stroke="#777" strokeWidth="1.800" /></svg></Pad>
        <Chevron s={7} c="#777" />
        <Pad $l={11} $r={7}><svg width="12" height="12" viewBox="0 0 12 12"><path d="M6 12V1M1 6l5-5 5 5" fill="none" stroke="#6e6e6e" strokeWidth="2" /></svg></Pad>
        <Address>
          <Folder /><Pad $l={8} $r={8}><Chevron d="right" s={7} c="#777" /></Pad>
          <Fit w={175}>COUNTDOWN_SYSTEM_BETA_1.0</Fit>
        </Address>
      </NavBar>
      <Panes>
        <Tree>
          {tree.map(([t, w, Icon, o]) => (
            <TreeRow key={t} $top={o.top} $sel={o.sel} $gap={o.gap}>
              <TreeIcon $top={o.top}><Icon /></TreeIcon>
              <Fit w={w}>{t}</Fit>
              {o.pin && <TreePin><Pin /></TreePin>}
            </TreeRow>
          ))}
        </Tree>
        <ExScroll>
          <ArrowBox><Chevron d="up" /></ArrowBox>
          <ExThumb />
          <ArrowBox><Chevron /></ArrowBox>
        </ExScroll>
        <FileArea>
          <ColHead><Fit w={35}>Nazwa</Fit><SortMark><Chevron d="up" s={10} c="#777" w={1.2} /></SortMark></ColHead>
          {files.map(([t, w, Icon, sel]) => (
            <FileRow key={t} $sel={sel}><FileIcon><Icon /></FileIcon><Fit w={w}>{t}</Fit></FileRow>
          ))}
          <HScroll><ArrowBox><Chevron d="left" /></ArrowBox><HThumb /></HScroll>
        </FileArea>
      </Panes>
      <Status>
        <Fit w={67}>Elementy: 10</Fit><Bar $l={10} $r={10} $c="#e4e4e4" $h={12} />
        <Fit w={159}>1 zaznaczony element. 1,37 KB</Fit><Bar $l={10} $r={0} $c="#e4e4e4" $h={12} />
      </Status>
    </Explorer>
  );
}

function Task() {
  return (
    <Taskbar>
      <StartBtn><svg width="16" height="16" viewBox="0 0 16 16"><path d="M0 2.200l7-1v6.300H0zM8 1l8-1v7.500H8zM0 8.500h7v6.300l-7-1zM8 8.500h8V16l-8-1.100z" fill="#fff" /></svg></StartBtn>
      <Search>
        <svg width="17" height="17" viewBox="0 0 17 17"><circle cx="11" cy="6" r="5" fill="none" stroke="#222" strokeWidth="1.400" /><path d="M7.500 9.500L1 16" stroke="#222" strokeWidth="1.400" /></svg>
        <Fit w={188}>Wpisz tu wyszukiwane słowa</Fit>
      </Search>
      <TaskBtn><svg width="17" height="15" viewBox="0 0 17 15"><path d="M.5 0v2.500h11V0M.5 15v-2.500h11V15M.5 4.500h11v6H.5zM15.500 0v3M15.500 9v6" fill="none" stroke="#e8e8e8" strokeWidth="1.200" /><path d="M14 4.500h3v2.500h-3z" fill="#fff" /></svg></TaskBtn>
      <TaskBtn $w={17} $r={6}><svg width="5" height="15" viewBox="0 0 5 15"><path d="M.5 0v15M4.500 0v15" stroke="#65736a" /></svg></TaskBtn>
      <TaskBtn><svg width="21" height="22" viewBox="0 0 21 22"><path d="M0 10C1 3 6 0 11 0c6 0 10 4 10 10v2.500H7c0 7 8 6 12 3.500v4C11 24.500 1 21.500 2 13 2.500 9 5 7 8 6c-1 1.300-1.300 2-1.400 3H15c0-7-10-6-15 1z" fill="#0078d7" /></svg></TaskBtn>
      <TaskBtn $w={50}><svg width="23" height="23" viewBox="0 0 23 23"><path d="M1 0h12l4 4v19H1z" fill="#f0f0f0" stroke="#aaa" strokeWidth=".6" /><path d="M3 5h11M3 8h11M3 11h8M3 14h7M3 17h6" stroke="#b0b0b0" strokeDasharray="1 1" /><path d="M11 11c0-4 7-4 7 0v3h-5c-3 0-3 4-2 5-3 0-3-7 1-7h4z" fill="#3571a5" /><path d="M18 12c5 0 5 7 1 7h-3v2h-4v-3c0-2 1-3 3-3h2c1 0 1-1 1-3z" fill="#ffd23f" /></svg></TaskBtn>
      <TaskBtn $bg="#58675f" $line="#76b9ed"><svg width="22" height="20" viewBox="0 0 22 20"><path d="M0 1h8l2 2h11v5H0z" fill="#e39b0b" /><path d="M0 4h22v15H0z" fill="#ffd25b" /><path d="M3 19v-7q0-1 1-1h14q1 0 1 1v7h-4v-4H7v4z" fill="#3f97db" /></svg></TaskBtn>
      <TaskBtn $w={50}><svg width="24" height="24" viewBox="0 0 24 24"><ellipse cx="11" cy="8" rx="9.500" ry="6.500" transform="rotate(-28 11 8)" fill="#f7f7f7" stroke="#c83a35" strokeWidth="2" /><path d="M3 13l8 4 3-4" fill="#999" /><path d="M9 4l6 12M14 3l1 13" stroke="#aaa" strokeWidth="1.500" /><ellipse cx="14" cy="20" rx="2" ry="3.500" fill="none" stroke="#1e78b8" strokeWidth="1.700" transform="rotate(15 14 20)" /><ellipse cx="19" cy="18" rx="2" ry="3.500" fill="none" stroke="#1e78b8" strokeWidth="1.700" transform="rotate(-45 19 18)" /></svg></TaskBtn>
      <TaskBtn $w={48} $r={5}><VncIcon s={23} /></TaskBtn>
      <TaskBtn $w={40} $r={5} $line="#76b9ed"><svg width="19" height="18" viewBox="0 0 19 18"><path d="M0 0h19v9l-9 9H0z" fill="#ffe500" /><path d="M10 9h9l-9 9z" fill="#33442b" /></svg></TaskBtn>
      <TaskBtn $r={5} $bg="#b36b2e" $line="#ff7a00">
        <svg width="25" height="24" viewBox="0 0 25 24"><rect width="25" height="24" rx="1.500" fill="#fae100" /><path d="M12.500 4c14 0 12 14 0 13.500L8 21l1-4.300C-1 13 2 4 12.500 4z" fill="#3b1e1e" /><text x="12.500" y="13.300" textAnchor="middle" fontSize="6.500" fontWeight="900" fontFamily="Open Sans, sans-serif" fill="#fae100">TALK</text></svg>
      </TaskBtn>
      <TaskBtn $w={40} $r={9} $line="#76b9ed"><RdpIcon s={24} /></TaskBtn>
      <TaskBtn $w={40} $line="#76b9ed" />
      <Tray>
        <svg width="28" height="28" viewBox="0 0 28 28"><circle cx="14" cy="14" r="13" fill="#1596dc" stroke="#fff" strokeWidth="2" /><path d="M9.500 11c0-6 9-6 9-1 0 3.500-4.500 3.500-4.500 7" fill="none" stroke="#fff" strokeWidth="3" /><circle cx="14" cy="21" r="1.900" fill="#fff" /></svg>
        <Pad $l={13} $r={9}><Chevron d="up" s={13} c="#f4f4f4" w={1} /></Pad>
        <DropboxMark c="#fff" />
        <Pad $l={9} $r={7}><svg width="17" height="13" viewBox="0 0 17 13"><path d="M5.500 3.500h10v7h-10zM1 1v3h4V1M3 4v6.500h3M1.500 0v2M4.500 0v2" fill="none" stroke="#fff" /><path d="M7.500 5.500h6v3h-6z" fill="#fff" /><path d="M16.500 6v3" stroke="#fff" /></svg></Pad>
        <svg width="16" height="14" viewBox="0 0 16 14"><path d="M.5 5h2L6 1.500v11L2.500 9h-2z" fill="none" stroke="#fff" /><path d="M8 5q1.500 2 0 4M10 3q3 4 0 8M12.500 1q4.500 6 0 12" fill="none" stroke="#ddd" /></svg>
        <Pad $l={10} $r={11}><svg width="14" height="14" viewBox="0 0 14 14"><path d="M1 13A12 12 0 0113 1M4 13.500A9 9 0 0113 4.500M7 13.500a6 6 0 016-6M9.500 13.500a4 4 0 014-4" fill="none" stroke="#ccc" strokeWidth="1.100" /><circle cx="12.300" cy="12.500" r="1.400" fill="#fff" /></svg></Pad>
        <Fit w={22}>POL</Fit>
        <Clock><Fit w={25}>12:11</Fit><Fit w={54}>15.11.2019</Fit></Clock>
        <svg width="25" height="25" viewBox="0 0 25 25"><path d="M0 2h16v12H9l-3.500 4v-4H0z" fill="#fff" /><path d="M3 5.500h10M3 8h10M3 10.500h7" stroke="#2b3d33" /><circle cx="16" cy="17" r="7.500" fill="#3e4540" stroke="#aaa" /><text x="16" y="21" textAnchor="middle" fontSize="11" fill="#fff" fontFamily="Noto Sans, sans-serif">8</text></svg>
      </Tray>
    </Taskbar>
  );
}

export default function App() {
  return (
    <Screen>
      <Global />
      <DesktopRow>
        <DesktopStrip><div>1C</div><div>&nbsp;IS</div><StripLast>G</StripLast></DesktopStrip>
        <RdpWindow>
          <RdpTitle><RdpIcon /><Fit w={247}>192.168.226.165 - Podłączanie pulpitu zdalnego</Fit></RdpTitle>
          <VncTitle><VncIcon /><Fit w={165}>hs00-spare - TightVNC Viewer</Fit></VncTitle>
          <VncTools />
          <RemoteArea>
            <GmesApp />
            <VScroll><VThumb /><Chevron s={9} /></VScroll>
          </RemoteArea>
        </RdpWindow>
      </DesktopRow>
      <Task />
      <ExplorerWindow />
      <Cursor>
        <svg width="16" height="28" viewBox="0 0 16 28"><path d="M1 1v20l5-4.500L9.500 26l3-1.500L9 15.500h6z" fill="#000" stroke="#fff" strokeWidth="1" /></svg>
      </Cursor>
    </Screen>
  );
}
